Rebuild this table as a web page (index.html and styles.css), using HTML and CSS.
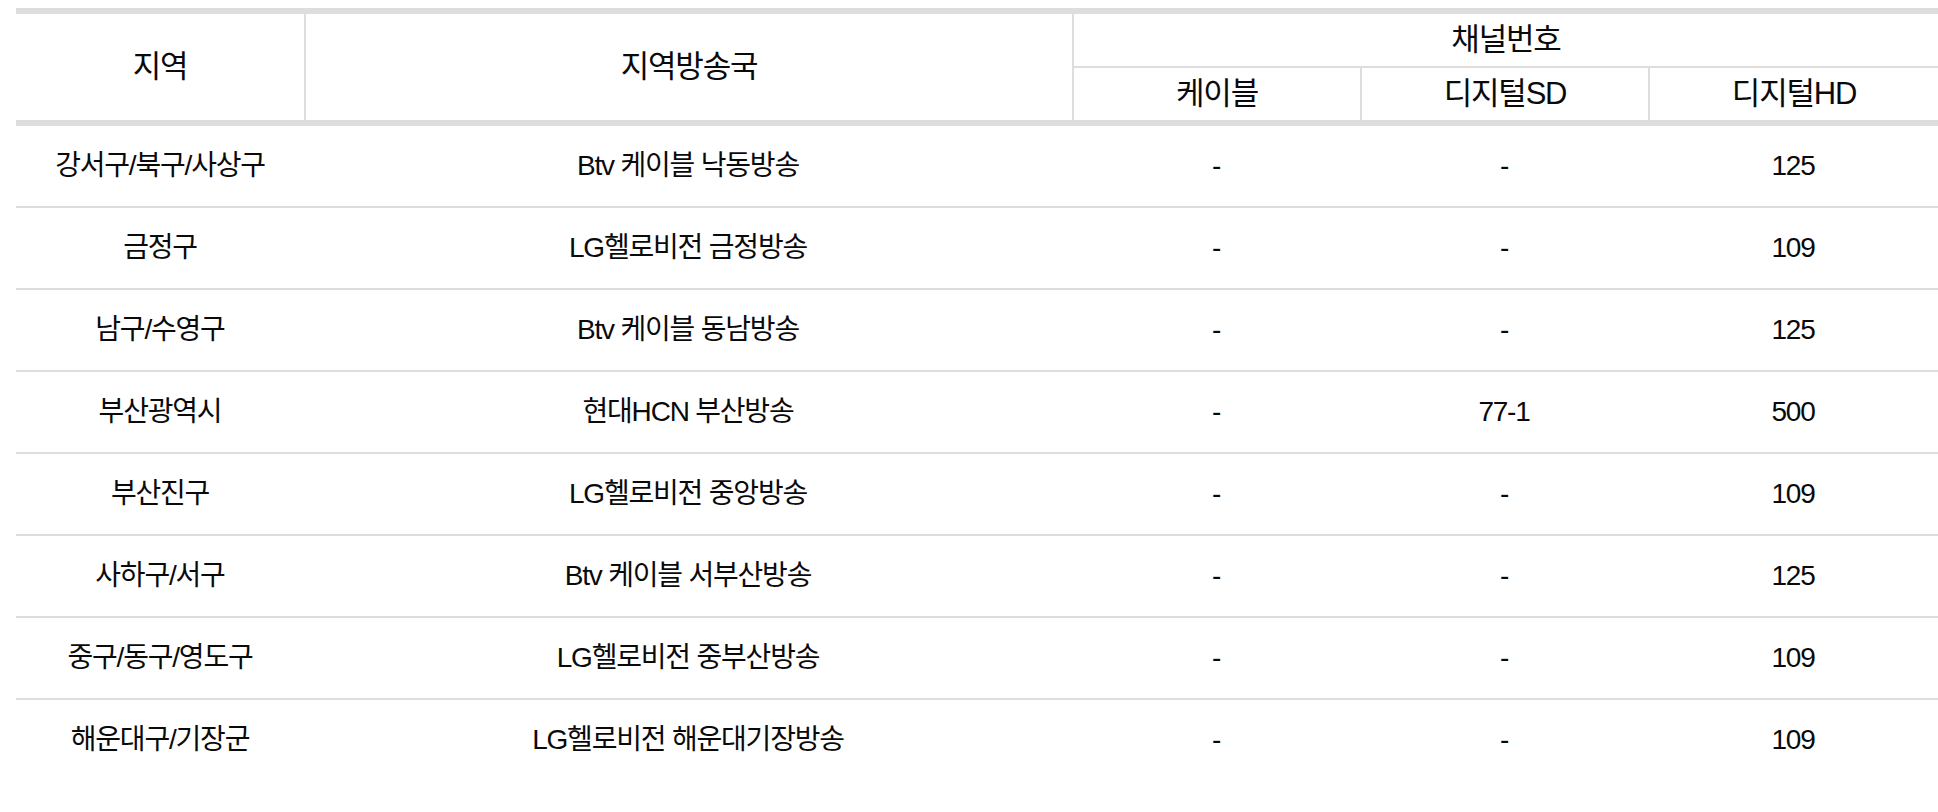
FILE: index.html
```html
<!DOCTYPE html>
<html lang="ko">
<head>
<meta charset="utf-8">
<title>지역방송국 채널번호</title>
<link rel="stylesheet" href="styles.css">
</head>
<body>
<div class="wrap">
  <table class="channels">
    <colgroup>
      <col class="c-region">
      <col class="c-station">
      <col class="c-num">
      <col class="c-num">
      <col class="c-last">
    </colgroup>
    <thead>
      <tr class="h1">
        <th rowspan="2" class="span">지역</th>
        <th rowspan="2" class="span sep">지역방송국</th>
        <th colspan="3" class="group sep">채널번호</th>
      </tr>
      <tr class="h2">
        <th class="sub sep">케이블</th>
        <th class="sub sep">디지털SD</th>
        <th class="sub sep">디지털HD</th>
      </tr>
    </thead>
    <tbody>
      <tr><td>강서구/북구/사상구</td><td>Btv 케이블 낙동방송</td><td>-</td><td>-</td><td>125</td></tr>
      <tr><td>금정구</td><td>LG헬로비전 금정방송</td><td>-</td><td>-</td><td>109</td></tr>
      <tr><td>남구/수영구</td><td>Btv 케이블 동남방송</td><td>-</td><td>-</td><td>125</td></tr>
      <tr><td>부산광역시</td><td>현대HCN 부산방송</td><td>-</td><td>77-1</td><td>500</td></tr>
      <tr><td>부산진구</td><td>LG헬로비전 중앙방송</td><td>-</td><td>-</td><td>109</td></tr>
      <tr><td>사하구/서구</td><td>Btv 케이블 서부산방송</td><td>-</td><td>-</td><td>125</td></tr>
      <tr><td>중구/동구/영도구</td><td>LG헬로비전 중부산방송</td><td>-</td><td>-</td><td>109</td></tr>
      <tr><td>해운대구/기장군</td><td>LG헬로비전 해운대기장방송</td><td>-</td><td>-</td><td>109</td></tr>
    </tbody>
  </table>
</div>
</body>
</html>
```
FILE: styles.css
```css
html, body {
  margin: 0;
  padding: 0;
  background: #fff;
  overflow: hidden;
}

.wrap {
  padding: 8px 0 0 16px;
}

.channels {
  width: 1922px;
  table-layout: fixed;
  border-collapse: separate;
  border-spacing: 0;
  font-family: "Liberation Sans", "Noto Sans CJK KR", sans-serif;
  font-size: 28px;
  letter-spacing: -1.2px;
  color: #0a0a0a;
}

.c-region { width: 288px; }
.c-station { width: 768px; }
.c-num { width: 288px; }
.c-last { width: 290px; }

.channels th,
.channels td {
  padding: 0;
  text-align: center;
  vertical-align: middle;
  font-weight: normal;
  white-space: nowrap;
}

.channels th {
  font-size: 31px;
}

.channels th.sep {
  border-left: 2px solid #ddd;
}

.h1 th {
  border-top: 6px solid #ddd;
  line-height: 52px;
}

.h1 th.span {
  border-bottom: 6px solid #ddd;
}

.h1 th.group {
  border-bottom: 2px solid #ddd;
}

.h2 th {
  line-height: 52px;
  border-bottom: 6px solid #ddd;
}

.channels td {
  line-height: 80px;
  border-bottom: 2px solid #ddd;
}

.channels tbody tr:last-child td {
  border-bottom: none;
}
```
